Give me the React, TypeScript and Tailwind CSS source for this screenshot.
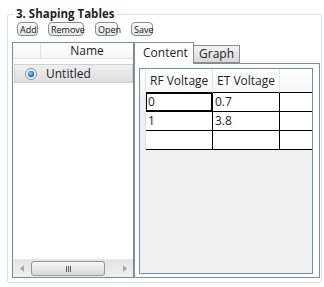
import React from 'react';

const font = { fontFamily: '"Segoe UI", "Open Sans", sans-serif' };

const SmallButton = ({ label, className = '' }: { label: string; className?: string }) => (
  <button
    className={`h-[14px] px-[2px] rounded-[4px] border border-[#8c8c8c] bg-gradient-to-b from-[#fdfdfd] to-[#e3e3e3] text-[9px] leading-[11px] text-[#1a1a1a] ${className}`}
  >
    {label}
  </button>
);

const RadioDot = () => (
  <svg width="12" height="12" viewBox="0 0 12 12">
    <defs>
      <radialGradient id="rd" cx="0.4" cy="0.35" r="0.7">
        <stop offset="0" stopColor="#8fd3f8" />
        <stop offset="0.6" stopColor="#2a8fd6" />
        <stop offset="1" stopColor="#1261a8" />
      </radialGradient>
    </defs>
    <circle cx="6" cy="6" r="5.5" fill="#f4f4f4" stroke="#8e8f8f" />
    <circle cx="6" cy="6" r="3.2" fill="url(#rd)" />
  </svg>
);

const HScrollBar = () => (
  <div className="h-[18px] flex items-center bg-gradient-to-b from-[#e4e4e4] to-[#f0f0f0] border-t border-[#eaeaea]">
    <div className="w-[17px] flex justify-center">
      <svg width="4" height="7" viewBox="0 0 4 7">
        <path d="M4 0 L0 3.5 L4 7 Z" fill="#a8a8a8" />
      </svg>
    </div>
    <div className="ml-[1px] w-[74px] h-[15px] rounded-[3px] border border-[#979797] bg-gradient-to-b from-[#f7f7f7] to-[#d8d8d8] flex items-center justify-center gap-[1px]">
      <span className="w-[1px] h-[6px] bg-[#5d5d5d]" />
      <span className="w-[1px] h-[6px] bg-[#5d5d5d]" />
      <span className="w-[1px] h-[6px] bg-[#5d5d5d]" />
    </div>
    <div className="flex-1" />
    <div className="w-[17px] flex justify-center">
      <svg width="4" height="7" viewBox="0 0 4 7">
        <path d="M0 0 L4 3.5 L0 7 Z" fill="#a8a8a8" />
      </svg>
    </div>
  </div>
);

const rows = [
  ['0', '0.7'],
  ['1', '3.8'],
  ['', ''],
];

export default function App() {
  return (
    <div className="w-[324px] h-[287px] bg-white pl-[7px] pt-[6px] text-[#1e1e1e]" style={font}>
      <fieldset className="w-[315px] h-[277px] border border-[#d5dfe5] rounded-[3px] pl-[4px] pr-[1px]">
        <legend className="ml-[1px] px-[3px] text-[11.5px] leading-[16px] font-bold">3. Shaping Tables</legend>

        {/* toolbar */}
        <div className="flex items-center h-[14px] pl-[5px]">
          <SmallButton label="Add" className="w-[21px]" />
          <SmallButton label="Remove" className="ml-[10px] w-[36px]" />
          <SmallButton label="Open" className="ml-[11px] w-[23px]" />
          <SmallButton label="Save" className="ml-[13px] w-[22px]" />
        </div>

        <div className="mt-[6px] flex h-[236px] text-[12px]">
          {/* list */}
          <div className="w-[122px] border border-[#828790] bg-white flex flex-col">
            <div className="h-[16px] flex border-b border-[#e3e3e3] bg-gradient-to-b from-white to-[#f6f6f6]">
              <div className="w-[28px] border-r border-[#e3e3e3]" />
              <div className="flex-1 text-center leading-[15px]">Name</div>
            </div>
            <div className="mt-[5px] ml-[1px] h-[19px] flex items-center border border-[#d0d0d0] bg-gradient-to-b from-[#f0f0f0] to-[#dedede]">
              <div className="w-[31px] flex justify-center pl-[1px]">
                <RadioDot />
              </div>
              <span className="leading-[16px]">Untitled</span>
            </div>
            <div className="flex-1" />
            <HScrollBar />
          </div>

          {/* tab control */}
          <div className="w-[186px] flex flex-col">
            <div className="h-[21px] flex items-end">
              <div className="relative z-10 w-[60px] h-[22px] -mb-[1px] border border-b-0 border-[#898c95] bg-white pl-[8px] leading-[19px]">
                Content
              </div>
              <div className="w-[46px] h-[18px] border border-l-0 border-[#898c95] bg-gradient-to-b from-[#f2f2f2] to-[#d9d9d9] pl-[5px] leading-[16px]">
                Graph
              </div>
            </div>
            <div className="flex-1 border border-[#898c95] bg-white pt-[4px] pl-[4px] pr-[6px] pb-[3px]">
              <div className="h-full border border-[#7191b4] bg-[#f0f0f0] flex flex-col">
                <div className="h-[24px] flex bg-gradient-to-b from-white to-[#f7f7f7]">
                  <div className="w-[6px] border-r border-[#e5e5e5]" />
                  <div className="w-[67px] border-r border-[#e5e5e5] border-b border-b-black pl-[4px] leading-[23px]">RF Voltage</div>
                  <div className="w-[67px] border-r border-[#e5e5e5] border-b border-b-black pl-[4px] leading-[23px]">ET Voltage</div>
                  <div className="flex-1 border-b border-black" />
                </div>
                {rows.map((r, i) => (
                  <div key={i} className="h-[19px] flex">
                    <div className="w-[6px] bg-[#f0f0f0] border-r border-[#e0e0e0]" />
                    <div
                      className={`w-[67px] border-r border-b border-black bg-white pl-[2px] leading-[18px] ${i === 0 ? 'shadow-[inset_0_0_0_1px_black]' : ''}`}
                    >
                      {r[0]}
                    </div>
                    <div className="w-[67px] border-r border-b border-black bg-white pl-[2px] leading-[18px]">{r[1]}</div>
                    <div className="flex-1 border-b border-black bg-white" />
                  </div>
                ))}
                <div className="flex-1" />
              </div>
            </div>
          </div>
        </div>
      </fieldset>
    </div>
  );
}
